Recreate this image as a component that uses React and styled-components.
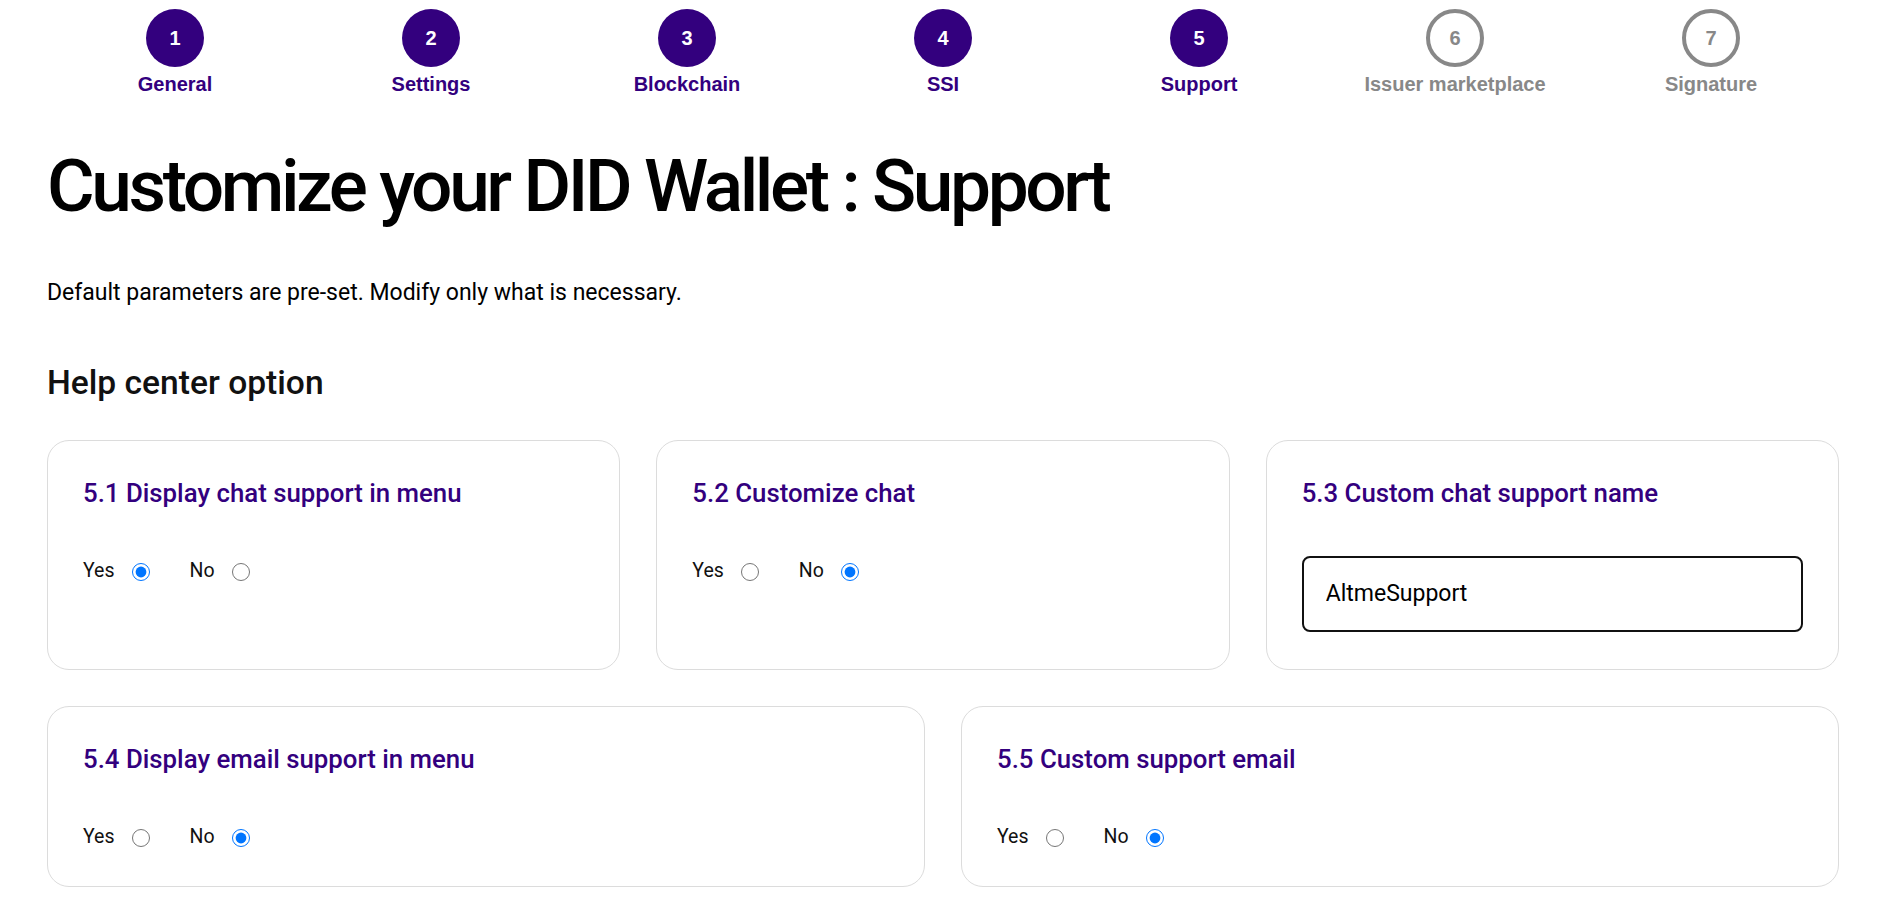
import React from "react";
import styled, { createGlobalStyle } from "styled-components";

const GlobalStyle = createGlobalStyle`
  html, body {
    margin: 0;
    padding: 0;
    background: #ffffff;
  }
  body {
    font-family: Roboto, "Liberation Sans", Arial, sans-serif;
    color: #000;
  }
`;

const PURPLE = "#33007e";
const GREY = "#888888";

const Page = styled.div`
  padding: 9px 45px 40px 47px;
`;

const Stepper = styled.div`
  display: grid;
  grid-template-columns: repeat(7, 1fr);
`;

const Step = styled.div`
  display: flex;
  flex-direction: column;
  align-items: center;
  gap: 6px;
  font-family: "Liberation Sans", Arial, sans-serif;
  font-weight: 700;
  color: ${(p) => (p.$done ? PURPLE : GREY)};
`;

const Circle = styled.div`
  box-sizing: border-box;
  width: 58px;
  height: 58px;
  border-radius: 50%;
  display: flex;
  align-items: center;
  justify-content: center;
  font-size: 20px;
  background: ${(p) => (p.$done ? PURPLE : "#fff")};
  border: ${(p) => (p.$done ? "none" : `4px solid ${GREY}`)};
  color: ${(p) => (p.$done ? "#fff" : GREY)};
`;

const StepLabel = styled.div`
  font-size: 20px;
  line-height: 23px;
`;

const Title = styled.h1`
  margin: 48px 0 0;
  font-size: 73px;
  font-weight: 500;
  line-height: 1.172;
  letter-spacing: -3.4px;
`;

const Intro = styled.p`
  margin: 49px 0 0;
  font-size: 23px;
  line-height: 27px;
`;

const Section = styled.h2`
  margin: 57px 0 0;
  font-size: 33.6px;
  font-weight: 500;
  line-height: 39px;
  color: #111;
`;

const Grid = styled.div`
  display: grid;
  grid-template-columns: repeat(${(p) => p.$cols}, 1fr);
  gap: 36px;
  margin-top: ${(p) => p.$top}px;
`;

const Card = styled.div`
  border: 1px solid #dcdcdc;
  border-radius: 22px;
  padding: 38px 35px 37px;
  display: flex;
  flex-direction: column;
`;

const CardTitle = styled.h3`
  margin: 0;
  font-size: 25.8px;
  font-weight: 500;
  line-height: 29px;
  color: ${PURPLE};
`;

const RadioRow = styled.div`
  margin-top: 51px;
  height: 24px;
  display: flex;
  align-items: center;
`;

const Option = styled.label`
  display: flex;
  align-items: center;
  font-size: 19.5px;
  color: #111;
  margin-right: 40px;
`;

const Radio = styled.input.attrs({ type: "radio" })`
  width: 18px;
  height: 18px;
  margin: 3px 0 0 17px;
  accent-color: #0075ff;
`;

const TextInput = styled.input`
  margin-top: 48px;
  box-sizing: border-box;
  width: 100%;
  height: 76px;
  border: 2px solid #111;
  border-radius: 8px;
  padding: 0 22px;
  font-family: Roboto, "Liberation Sans", Arial, sans-serif;
  font-size: 23px;
  color: #000;
  outline: none;
`;

const steps = [
  { n: 1, label: "General", done: true },
  { n: 2, label: "Settings", done: true },
  { n: 3, label: "Blockchain", done: true },
  { n: 4, label: "SSI", done: true },
  { n: 5, label: "Support", done: true },
  { n: 6, label: "Issuer marketplace", done: false },
  { n: 7, label: "Signature", done: false },
];

function YesNo({ name, value }) {
  return (
    <RadioRow>
      <Option>
        Yes
        <Radio name={name} defaultChecked={value === "yes"} />
      </Option>
      <Option>
        No
        <Radio name={name} defaultChecked={value === "no"} />
      </Option>
    </RadioRow>
  );
}

export default function App() {
  return (
    <Page>
      <GlobalStyle />
      <Stepper>
        {steps.map((s) => (
          <Step key={s.n} $done={s.done}>
            <Circle $done={s.done}>{s.n}</Circle>
            <StepLabel>{s.label}</StepLabel>
          </Step>
        ))}
      </Stepper>

      <Title>Customize your DID Wallet : Support</Title>
      <Intro>Default parameters are pre-set. Modify only what is necessary.</Intro>
      <Section>Help center option</Section>

      <Grid $cols={3} $top={38}>
        <Card>
          <CardTitle>5.1 Display chat support in menu</CardTitle>
          <YesNo name="chatMenu" value="yes" />
        </Card>
        <Card>
          <CardTitle>5.2 Customize chat</CardTitle>
          <YesNo name="customChat" value="no" />
        </Card>
        <Card>
          <CardTitle>5.3 Custom chat support name</CardTitle>
          <TextInput defaultValue="AltmeSupport" spellCheck={false} />
        </Card>
      </Grid>

      <Grid $cols={2} $top={36}>
        <Card>
          <CardTitle>5.4 Display email support in menu</CardTitle>
          <YesNo name="emailMenu" value="no" />
        </Card>
        <Card>
          <CardTitle>5.5 Custom support email</CardTitle>
          <YesNo name="customEmail" value="no" />
        </Card>
      </Grid>
    </Page>
  );
}
